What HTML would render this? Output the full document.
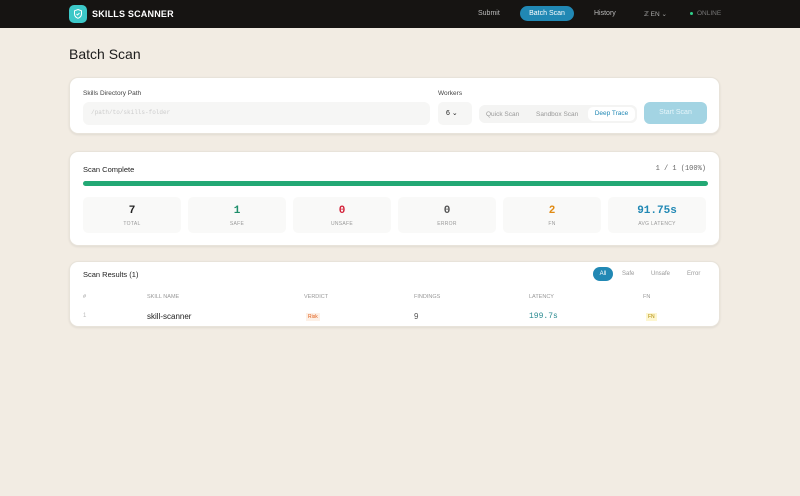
<!DOCTYPE html><html><head><style>
*{box-sizing:border-box;margin:0;padding:0}
body{width:800px;height:496px;background:#f2ece3;font-family:"Liberation Sans",sans-serif;color:#222;position:relative;overflow:hidden}
.nav{position:absolute;left:0;top:0;width:800px;height:28px;background:#161412}
.logo{position:absolute;left:69px;top:5px;width:18px;height:18px;border-radius:5px;background:#3cc8c8}
.abs{position:absolute;white-space:nowrap}
.card{position:absolute;left:69px;width:651px;background:#fff;border-radius:9px;box-shadow:0 1px 2px rgba(0,0,0,.08);border:1px solid #e8e3da}
.mono{font-family:"Liberation Mono",monospace}
.stat{position:absolute;top:45px;width:98px;height:36px;background:#f9f9f8;border-radius:5px;text-align:center}
.stat b{display:block;font-family:"Liberation Mono",monospace;font-size:11px;margin-top:8px}
.stat span{display:block;font-size:5px;color:#999;margin-top:4px;letter-spacing:.3px}
.th{position:absolute;top:32px;font-size:5.5px;color:#999}
</style></head><body>
<div class="nav">
<div class="logo"><svg width="18" height="18" viewBox="0 0 18 18"><path d="M9 4.5l3.5 1.3v3c0 2.2-1.5 3.8-3.5 4.5-2-.7-3.5-2.3-3.5-4.5v-3z" fill="none" stroke="#fff" stroke-width="1"/><path d="M7.5 9l1 1 2-2" fill="none" stroke="#fff" stroke-width=".9"/></svg></div>
<div class="abs" style="left:92px;top:9px;color:#fff;font-size:9px;font-weight:bold;letter-spacing:.2px">SKILLS SCANNER</div>
<div class="abs" style="left:478px;top:10px;color:#bbb;font-size:7px">Submit</div>
<div class="abs" style="left:520px;top:6px;width:54px;height:15px;border-radius:8px;background:#2188b4;color:#fff;font-size:7px;text-align:center;line-height:15px">Batch Scan</div>
<div class="abs" style="left:594px;top:10px;color:#bbb;font-size:7px">History</div>
<div class="abs" style="left:644px;top:10px;color:#aaa;font-size:6.5px">ℤ EN ⌄</div>
<div class="abs" style="left:690px;top:12px;width:3px;height:3px;border-radius:50%;background:#2fd08a"></div>
<div class="abs" style="left:697px;top:10px;color:#777;font-size:6.5px">ONLINE</div>
</div>
<div class="abs" style="left:69px;top:46px;font-size:14px;color:#1c1c1c">Batch Scan</div>
<div class="card" style="top:77px;height:57px">
<div class="abs" style="left:13px;top:12px;font-size:6.5px;color:#444">Skills Directory Path</div>
<div class="abs mono" style="left:13px;top:24px;width:347px;height:23px;background:#f6f6f5;border-radius:6px;font-size:6px;color:#ccc;padding:7px 8px">/path/to/skills-folder</div>
<div class="abs" style="left:368px;top:12px;font-size:6.5px;color:#444">Workers</div>
<div class="abs" style="left:368px;top:24px;width:34px;height:23px;background:#f6f6f5;border-radius:5px;font-size:7px;padding:7px 8px">6 ⌄</div>
<div class="abs" style="left:409px;top:27px;width:158px;height:18px;background:#f4f4f3;border-radius:6px"></div>
<div class="abs" style="left:416px;top:33px;font-size:6.5px;color:#999">Quick Scan</div>
<div class="abs" style="left:466px;top:33px;font-size:6.5px;color:#999">Sandbox Scan</div>
<div class="abs" style="left:518px;top:29px;width:47px;height:14px;background:#fff;border-radius:5px;font-size:6.5px;color:#2188b4;text-align:center;line-height:14px">Deep Trace</div>
<div class="abs" style="left:574px;top:24px;width:63px;height:22px;background:#a3d4e3;border-radius:6px;font-size:7px;color:#e6f5fa;text-align:center;line-height:22px">Start Scan</div>
</div>
<div class="card" style="top:151px;height:95px">
<div class="abs" style="left:13px;top:13px;font-size:7.5px">Scan Complete</div>
<div class="abs mono" style="right:13px;top:13px;font-size:7px;color:#666">1 / 1 (100%)</div>
<div class="abs" style="left:13px;top:29px;width:625px;height:5px;background:#22a874;border-radius:3px"></div>
<div class="stat" style="left:13px"><b>7</b><span>TOTAL</span></div>
<div class="stat" style="left:118px"><b style="color:#1e8e6a">1</b><span>SAFE</span></div>
<div class="stat" style="left:223px"><b style="color:#d32038">0</b><span>UNSAFE</span></div>
<div class="stat" style="left:328px"><b style="color:#555">0</b><span>ERROR</span></div>
<div class="stat" style="left:433px"><b style="color:#e08a12">2</b><span>FN</span></div>
<div class="stat" style="left:538px"><b style="color:#2188b4">91.75s</b><span>AVG LATENCY</span></div>
</div>
<div class="card" style="top:261px;height:66px">
<div class="abs" style="left:13px;top:8px;font-size:7.5px">Scan Results (1)</div>
<div class="abs" style="left:523px;top:5px;width:20px;height:14px;border-radius:7px;background:#2188b4;color:#fff;font-size:6px;text-align:center;line-height:14px">All</div>
<div class="abs" style="left:552px;top:9px;font-size:6px;color:#999">Safe</div>
<div class="abs" style="left:581px;top:9px;font-size:6px;color:#999">Unsafe</div>
<div class="abs" style="left:617px;top:9px;font-size:6px;color:#999">Error</div>
<div class="th" style="left:13px">#</div>
<div class="th" style="left:77px">SKILL NAME</div>
<div class="th" style="left:234px">VERDICT</div>
<div class="th" style="left:344px">FINDINGS</div>
<div class="th" style="left:459px">LATENCY</div>
<div class="th" style="left:573px">FN</div>
<div class="abs" style="left:13px;top:51px;font-size:6px;color:#bbb">1</div>
<div class="abs" style="left:77px;top:50px;font-size:8px">skill-scanner</div>
<div class="abs" style="left:236px;top:51px;font-size:5px;color:#e05a14;background:#fdf0e6;padding:1px 2px">Risk</div>
<div class="abs" style="left:344px;top:50px;font-size:8px;color:#555">9</div>
<div class="abs mono" style="left:459px;top:50px;font-size:8px;color:#2a8a90">199.7s</div>
<div class="abs" style="left:576px;top:51px;font-size:5px;color:#b08a00;background:#fdf6d0;padding:1px 2px">FN</div>
</div>
</body></html>
